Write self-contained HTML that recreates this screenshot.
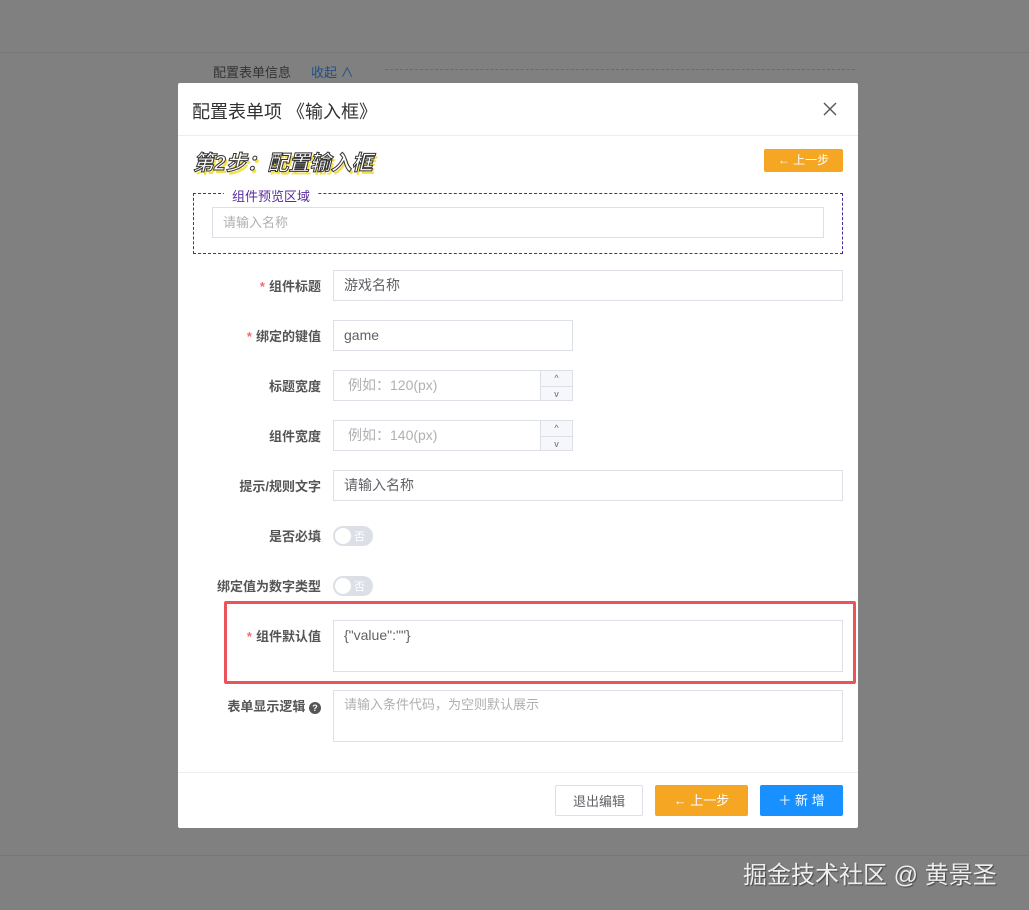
<!DOCTYPE html>
<html><head><meta charset="utf-8"><style>
*{box-sizing:border-box;margin:0;padding:0}
body{width:1029px;height:910px;background:#808080;font-family:"Liberation Sans","Noto Sans CJK SC",sans-serif;position:relative;overflow:hidden;font-size:14px;color:#606266}
.a{position:absolute}
.modal{left:178px;top:83px;width:680px;height:745px;background:#fff;border-radius:2px}
.lbl{position:absolute;right:537px;font-size:13px;font-weight:bold;color:#555;text-align:right;white-space:nowrap;margin-top:-2px}
.req{color:#f56c6c;margin-right:4px}
.inp{position:absolute;left:155px;height:31px;border:1px solid #dcdfe6;background:#fff;font-size:14px;padding-left:10px;line-height:29px;color:#606266}
.ph{color:#b0b0b0}
.sp{position:absolute;right:0;width:32px;height:14.5px;background:#f5f7fa;border-left:1px solid #dcdfe6;font-size:9px;text-align:center;line-height:14px;color:#666}
.sw{position:absolute;left:155px;width:40px;height:20px;border-radius:10px;background:#dcdfe6}
.sw i{position:absolute;left:2px;top:2px;width:16px;height:16px;border-radius:50%;background:#fff}
.sw b{position:absolute;left:21px;top:2px;font-size:11px;color:#fff;font-weight:normal}
.btn{position:absolute;height:31px;line-height:31px;text-align:center;font-size:13px;border-radius:2px}
</style></head><body>
<div class="a" style="left:0;top:52px;width:1029px;height:1px;background:#777"></div>
<div class="a" style="left:0;top:855px;width:1029px;height:1px;background:#777"></div>
<div class="a" style="left:213px;top:62px;font-size:13px;color:#333">配置表单信息</div>
<div class="a" style="left:311px;top:62px;font-size:13px;color:#1e4f8a">收起 ∧</div>
<div class="a" style="left:385px;top:69px;width:470px;border-top:1px dashed #6a6a6a"></div>
<div class="a" style="left:743px;top:855px;font-size:24px;color:#eee;text-shadow:1px 1px 1px #444">掘金技术社区 @ 黄景圣</div>

<div class="a modal">
 <div class="a" style="left:14px;top:15px;font-size:18px;color:#303133">配置表单项 《输入框》</div>
 <svg class="a" style="left:645px;top:19px" width="14" height="14" viewBox="0 0 14 14"><path d="M1 1L13 13M13 1L1 13" stroke="#555" stroke-width="1.4"/></svg>
 <div class="a" style="left:0;top:52px;width:680px;height:1px;background:#eee"></div>
 <div class="a" style="left:15px;top:64px;font-size:21px;font-weight:bold;font-style:italic;color:#fff;-webkit-text-stroke:1px #333;text-shadow:2px 3px 0 #f5e04a">第2步：配置输入框</div>
 <div class="btn" style="left:586px;top:66px;width:79px;height:23px;line-height:23px;background:#f5a623;color:#fff;font-size:12px">← 上一步</div>
 <div class="a" style="left:15px;top:110px;width:650px;height:61px;border:1px dashed #4b2aa0"></div>
 <div class="a" style="left:46px;top:103px;padding:0 8px;background:#fff;font-size:13px;color:#5a2aa0">组件预览区域</div>
 <div class="inp" style="left:34px;top:124px;width:612px"><span class="ph" style="font-size:13px">请输入名称</span></div>

 <div class="lbl" style="top:195px"><span class="req">*</span>组件标题</div>
 <div class="inp" style="top:187px;width:510px">游戏名称</div>
 <div class="lbl" style="top:245px"><span class="req">*</span>绑定的键值</div>
 <div class="inp" style="top:237px;width:240px">game</div>
 <div class="lbl" style="top:295px">标题宽度</div>
 <div class="inp" style="top:287px;width:240px;padding-left:14px"><span class="ph">例如：120(px)</span><div class="sp" style="top:0">^</div><div class="sp" style="top:14.5px;border-top:1px solid #dcdfe6">v</div></div>
 <div class="lbl" style="top:345px">组件宽度</div>
 <div class="inp" style="top:337px;width:240px;padding-left:14px"><span class="ph">例如：140(px)</span><div class="sp" style="top:0">^</div><div class="sp" style="top:14.5px;border-top:1px solid #dcdfe6">v</div></div>
 <div class="lbl" style="top:395px">提示/规则文字</div>
 <div class="inp" style="top:387px;width:510px">请输入名称</div>
 <div class="lbl" style="top:445px">是否必填</div>
 <div class="sw" style="top:443px"><i></i><b>否</b></div>
 <div class="lbl" style="top:495px">绑定值为数字类型</div>
 <div class="sw" style="top:493px"><i></i><b>否</b></div>

 <div class="a" style="left:46px;top:518px;width:632px;height:83px;border:3px solid #e8545a;border-radius:2px"></div>
 <div class="lbl" style="top:545px"><span class="req">*</span>组件默认值</div>
 <div class="inp" style="top:537px;width:510px;height:52px;line-height:24px;padding-top:2px">{"value":""}</div>
 <div class="lbl" style="top:615px">表单显示逻辑 <span style="display:inline-block;width:12px;height:12px;border-radius:50%;background:#555;color:#fff;font-size:9px;line-height:12px;text-align:center">?</span></div>
 <div class="inp" style="top:607px;width:510px;height:52px;line-height:24px;padding-top:2px;font-size:13px"><span class="ph">请输入条件代码，为空则默认展示</span></div>

 <div class="a" style="left:0;top:689px;width:680px;height:1px;background:#eee"></div>
 <div class="btn" style="left:377px;top:702px;width:88px;border:1px solid #dcdfe6;color:#606266">退出编辑</div>
 <div class="btn" style="left:477px;top:702px;width:93px;background:#f5a623;color:#fff">← 上一步</div>
 <div class="btn" style="left:582px;top:702px;width:83px;background:#1890ff;color:#fff">＋ 新 增</div>
</div>
</body></html>
